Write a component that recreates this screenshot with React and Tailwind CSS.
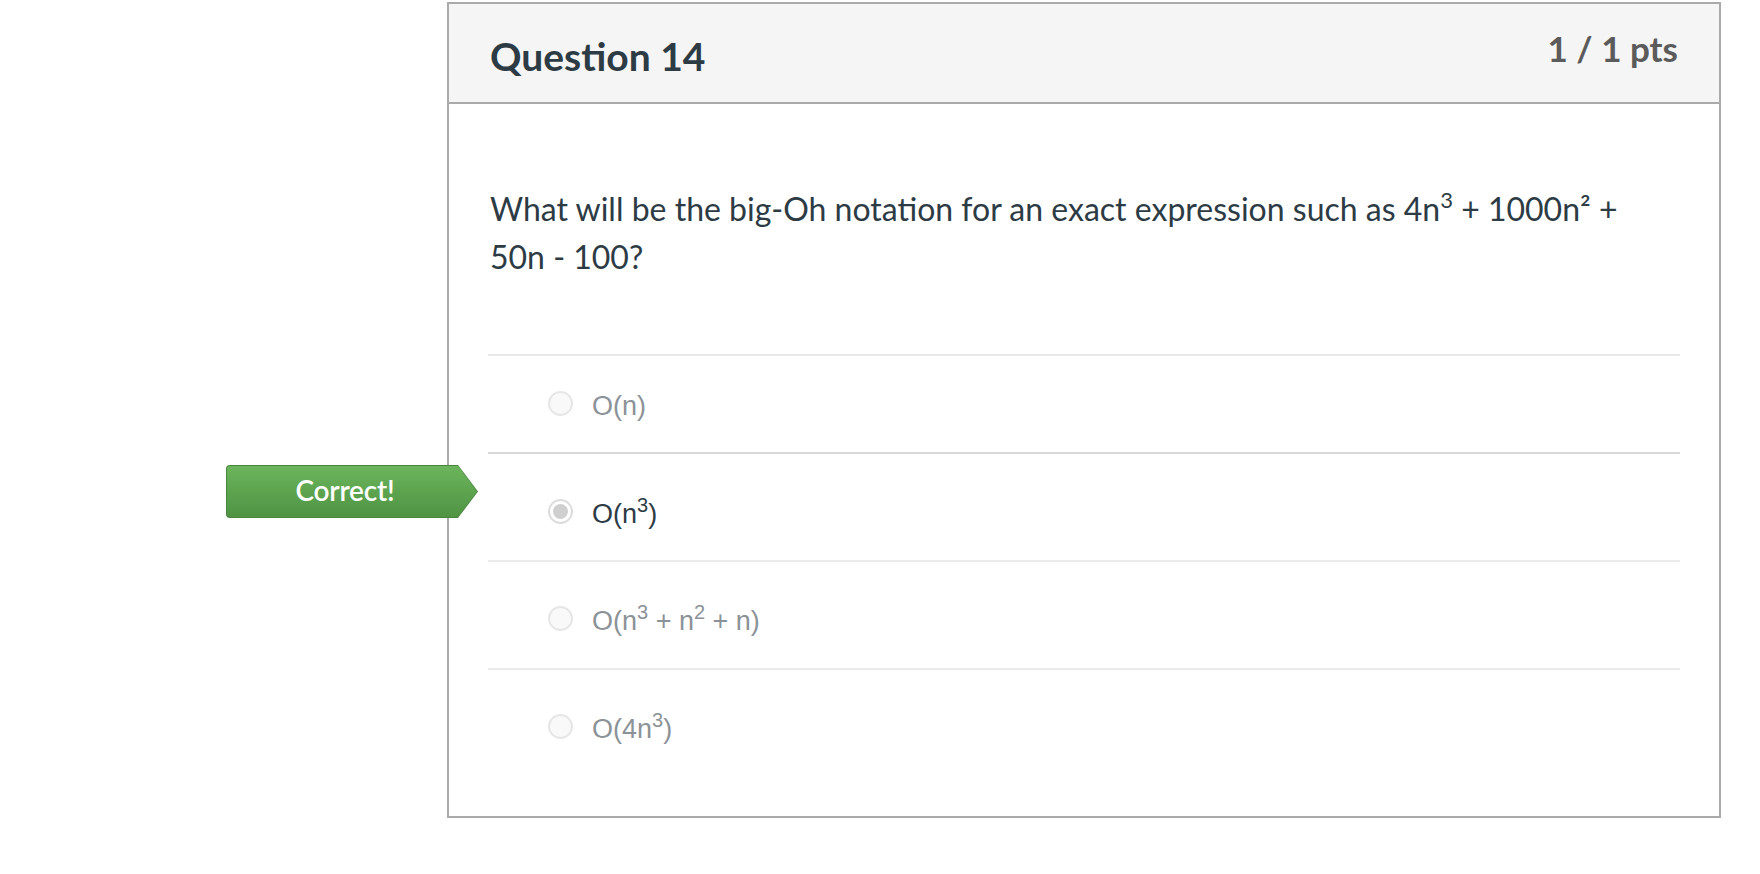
import React from "react";

const answers = [
  { id: "a1", label: <>O(n)</>, selected: false },
  {
    id: "a2",
    label: (
      <>
        O(n<sup className="text-[20px] top-[-0.55em]">3</sup>)
      </>
    ),
    selected: true,
  },
  {
    id: "a3",
    label: (
      <>
        O(n<sup className="text-[20px] top-[-0.55em]">3</sup> + n
        <sup className="text-[20px] top-[-0.55em]">2</sup> + n)
      </>
    ),
    selected: false,
  },
  {
    id: "a4",
    label: (
      <>
        O(4n<sup className="text-[20px] top-[-0.55em]">3</sup>)
      </>
    ),
    selected: false,
  },
];

function Radio({ selected }) {
  return selected ? (
    <span className="w-[25px] h-[25px] rounded-full border-2 border-[#dcdcdc] bg-white flex items-center justify-center shrink-0">
      <span className="w-[15px] h-[15px] rounded-full bg-[#cfcfcf]" />
    </span>
  ) : (
    <span className="w-[25px] h-[25px] rounded-full border-2 border-[#e6e6e6] bg-[#f9f9f9] shrink-0" />
  );
}

// 정답 표시 리본
function CorrectBadge() {
  return (
    <div className="absolute left-[-262px] top-[11px] w-[252px] h-[53px] bg-[#4a8540] [clip-path:polygon(0_0,232px_0,252px_50%,232px_100%,0_100%)] rounded-l-[4px]">
      <div className="absolute inset-[1px] bg-gradient-to-b from-[#6cb55c] to-[#4f9343] [clip-path:polygon(0_0,231px_0,250px_50%,231px_100%,0_100%)] rounded-l-[3px] flex items-center">
        <span className="w-[236px] text-center text-white text-[28px] font-semibold tracking-[-0.2px] pb-[3px]">
          Correct!
        </span>
      </div>
    </div>
  );
}

export default function App() {
  return (
    <main
      className="bg-white min-h-[874px] w-[1760px] pt-[2px]"
      style={{ fontFamily: "Lato, 'Noto Sans', sans-serif" }}
    >
      <div className="ml-[447px] w-[1274px] border-2 border-[#aaaaaa]">
        <div className="h-[100px] bg-[#f5f5f5] border-b-2 border-[#aaaaaa] flex justify-between pl-[41px] pr-[41px]">
          <h2 className="text-[39px] font-bold text-[#2d3b45] leading-none pt-[33px]">
            Question 14
          </h2>
          <p className="text-[35px] font-bold text-[#5b5b5b] leading-none pt-[27px]">
            1 / 1 pts
          </p>
        </div>
        <div className="px-[39px] pb-[40px]">
          <p className="pt-[81px] pl-[2px] text-[32px] leading-[48px] text-[#2d3b45] max-w-[1160px]">
            What will be the big-Oh notation for an exact expression such as 4n
            <sup className="text-[22px] top-[-0.6em]">3</sup> + 1000n² + 50n - 100?
          </p>
          <div className="mt-[73px]">
            {answers.map((a, i) => (
              <div
                key={a.id}
                className={
                  "relative flex items-center gap-[19px] pl-[60px] " +
                  (i === 0
                    ? "h-[98px] border-t-2 border-[#e8e8e8] pb-[2px]"
                    : i === 1
                    ? "h-[108px] border-t-2 border-[#d9d9d9] pt-[8px]"
                    : "h-[108px] border-t-2 border-[#ebebeb] pt-[6px]")
                }
              >
                {a.selected && <CorrectBadge />}
                <Radio selected={a.selected} />
                <span
                  className={
                    "text-[27px] leading-none pt-[7px] " +
                    (a.selected ? "text-[#2d3b45]" : "text-[#8b9298]")
                  }
                  style={{ fontFamily: "'Liberation Sans', Arial, sans-serif" }}
                >
                  {a.label}
                </span>
              </div>
            ))}
          </div>
        </div>
      </div>
    </main>
  );
}
